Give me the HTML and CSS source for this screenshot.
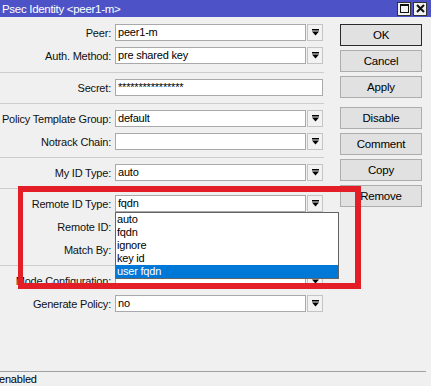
FILE: index.html
```html
<!DOCTYPE html>
<html>
<head>
<meta charset="utf-8">
<link rel="stylesheet" href="styles.css">
</head>
<body>
<div class="window">
  <div class="titlebar">
    <span class="title">Psec Identity &lt;peer1-m&gt;</span>
    <div class="tb-btns">
      <span class="tb-btn"><svg width="9" height="9" viewBox="0 0 9 9"><rect x="0.5" y="0.5" width="8" height="8" fill="none" stroke="#111" stroke-width="1"/><rect x="0.5" y="0.5" width="8" height="1.5" fill="#111"/></svg></span>
      <span class="tb-btn"><svg width="9" height="9" viewBox="0 0 9 9"><path d="M1 1 L8 8 M8 1 L1 8" stroke="#111" stroke-width="2"/></svg></span>
    </div>
  </div>
  <div class="main">
    <div class="form">
      <div class="group first">
        <div class="row"><span class="label">Peer:</span><span class="field">peer1-m</span><span class="drop"><svg width="7" height="7" viewBox="0 0 7 7"><rect x="0" y="0" width="7" height="1.5" fill="#000"/><polygon points="0,2.5 7,2.5 3.5,6.5" fill="#000"/></svg></span></div>
        <div class="row"><span class="label">Auth. Method:</span><span class="field">pre shared key</span><span class="drop"><svg width="7" height="7" viewBox="0 0 7 7"><rect x="0" y="0" width="7" height="1.5" fill="#000"/><polygon points="0,2.5 7,2.5 3.5,6.5" fill="#000"/></svg></span></div>
      </div>
      <div class="group">
        <div class="row"><span class="label">Secret:</span><span class="field wide">****************</span></div>
      </div>
      <div class="group">
        <div class="row"><span class="label">Policy Template Group:</span><span class="field">default</span><span class="drop"><svg width="7" height="7" viewBox="0 0 7 7"><rect x="0" y="0" width="7" height="1.5" fill="#000"/><polygon points="0,2.5 7,2.5 3.5,6.5" fill="#000"/></svg></span></div>
        <div class="row"><span class="label">Notrack Chain:</span><span class="field"></span><span class="drop"><svg width="7" height="7" viewBox="0 0 7 7"><rect x="0" y="0" width="7" height="1.5" fill="#000"/><polygon points="0,2.5 7,2.5 3.5,6.5" fill="#000"/></svg></span></div>
      </div>
      <div class="group">
        <div class="row"><span class="label">My ID Type:</span><span class="field">auto</span><span class="drop"><svg width="7" height="7" viewBox="0 0 7 7"><rect x="0" y="0" width="7" height="1.5" fill="#000"/><polygon points="0,2.5 7,2.5 3.5,6.5" fill="#000"/></svg></span></div>
      </div>
      <div class="group">
        <div class="row"><span class="label">Remote ID Type:</span><span class="field">fqdn</span><span class="drop"><svg width="7" height="7" viewBox="0 0 7 7"><rect x="0" y="0" width="7" height="1.5" fill="#000"/><polygon points="0,2.5 7,2.5 3.5,6.5" fill="#000"/></svg></span></div>
        <div class="row"><span class="label">Remote ID:</span><span class="field"></span><span class="drop"><svg width="7" height="7" viewBox="0 0 7 7"><rect x="0" y="0" width="7" height="1.5" fill="#000"/><polygon points="0,2.5 7,2.5 3.5,6.5" fill="#000"/></svg></span></div>
        <div class="row"><span class="label">Match By:</span><span class="field"></span><span class="drop"><svg width="7" height="7" viewBox="0 0 7 7"><rect x="0" y="0" width="7" height="1.5" fill="#000"/><polygon points="0,2.5 7,2.5 3.5,6.5" fill="#000"/></svg></span></div>
      </div>
      <div class="group last">
        <div class="row"><span class="label">Mode Configuration:</span><span class="field"></span><span class="drop"><svg width="7" height="7" viewBox="0 0 7 7"><rect x="0" y="0" width="7" height="1.5" fill="#000"/><polygon points="0,2.5 7,2.5 3.5,6.5" fill="#000"/></svg></span></div>
        <div class="row"><span class="label">Generate Policy:</span><span class="field">no</span><span class="drop"><svg width="7" height="7" viewBox="0 0 7 7"><rect x="0" y="0" width="7" height="1.5" fill="#000"/><polygon points="0,2.5 7,2.5 3.5,6.5" fill="#000"/></svg></span></div>
      </div>
    </div>
    <div class="buttons">
      <div class="btn ok">OK</div>
      <div class="btn">Cancel</div>
      <div class="btn gap">Apply</div>
      <div class="btn">Disable</div>
      <div class="btn">Comment</div>
      <div class="btn">Copy</div>
      <div class="btn">Remove</div>
    </div>
  </div>
  <div class="status">enabled</div>

  <div class="droplist">
    <div class="item">auto</div>
    <div class="item">fqdn</div>
    <div class="item">ignore</div>
    <div class="item">key id</div>
    <div class="item selected">user fqdn</div>
  </div>
  <div class="highlight"></div>
</div>
</body>
</html>
```

FILE: styles.css
```css
* { box-sizing: border-box; }
html, body { margin: 0; padding: 0; }
body {
  width: 431px;
  height: 386px;
  overflow: hidden;
  background: #f0f0f0;
  font-family: "Liberation Sans", Arial, sans-serif;
  font-size: 11px;
  letter-spacing: -0.2px;
  color: #000;
}
.window {
  position: relative;
  width: 431px;
  height: 386px;
  display: flex;
  flex-direction: column;
}
.titlebar {
  height: 17px;
  flex: none;
  background: #4d53c6;
  color: #fff;
  display: flex;
  align-items: center;
  justify-content: space-between;
  padding: 0 4px 0 2px;
}
.title { font-size: 11.5px; letter-spacing: -0.3px; }
.tb-btns { display: flex; gap: 2px; }
.tb-btn {
  width: 14px;
  height: 14px;
  background: #f2f2f2;
  border: 1px solid #333;
  display: flex;
  align-items: center;
  justify-content: center;
}
.main { flex: 1; display: flex; }
.form { width: 324px; flex: none; }
.group {
  display: flex;
  flex-direction: column;
  gap: 6px;
  padding: 6px 0 7px;
  border-bottom: 1px solid #cdcdcd;
}
.group.first { padding: 7px 0 8px; }
.group.last { border-bottom: none; }
.row { display: flex; align-items: center; height: 17px; }
.label {
  width: 111px;
  margin-right: 4px;
  display: flex;
  justify-content: flex-end;
  white-space: nowrap;
  color: #111;
}
.field {
  width: 191px;
  height: 17px;
  background: #fff;
  border: 1px solid #a9a9a9;
  padding-left: 2px;
  line-height: 15px;
  white-space: nowrap;
}
.field.wide { width: 208px; }
.drop {
  width: 16px;
  height: 17px;
  margin-left: 1px;
  background: #f2f2f2;
  border: 1px solid #c4c4c4;
  display: flex;
  align-items: center;
  justify-content: center;
}
.drop svg { display: block; }
.buttons {
  margin-left: 16px;
  padding-top: 7px;
  width: 82px;
  display: flex;
  flex-direction: column;
}
.btn {
  height: 22px;
  margin-bottom: 4px;
  background: #e1e1e1;
  border: 1px solid #adadad;
  text-align: center;
  line-height: 20px;
  font-size: 11.5px;
}
.btn.ok { border-color: #2a2a2a; }
.btn.gap { margin-bottom: 9px; }
.status {
  height: 15px;
  flex: none;
  margin-right: 5px;
  border-top: 1px solid #a0a0a0;
  line-height: 14px;
  margin-left: -1px;
}
.droplist {
  position: absolute;
  left: 115px;
  top: 212px;
  width: 224px;
  background: #fff;
  border: 1px solid #646464;
}
.item {
  height: 13px;
  line-height: 13px;
  padding-left: 1px;
}
.item.selected { background: #0078d7; color: #fff; }
.highlight {
  position: absolute;
  left: 18px;
  top: 186px;
  width: 343px;
  height: 103px;
  border: 6px solid #e31e26;
  border-left-width: 5px;
}
```
